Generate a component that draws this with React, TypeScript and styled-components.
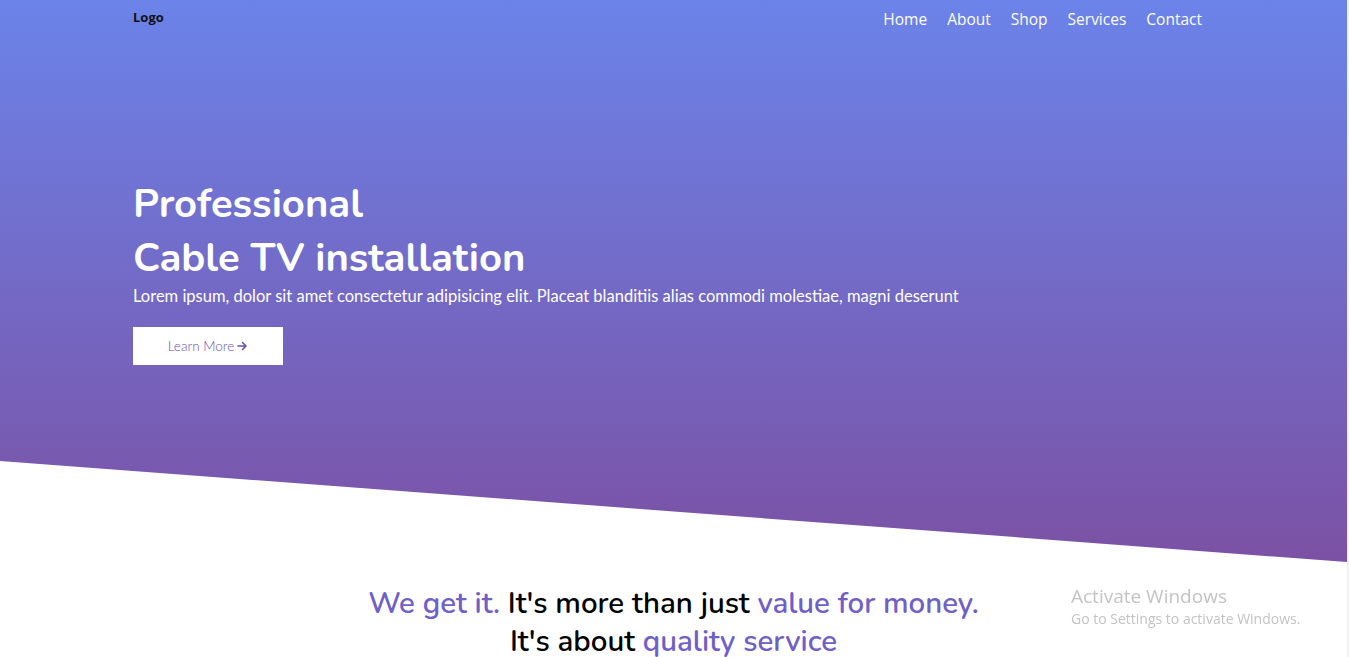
import React from "react";
import styled, { createGlobalStyle } from "styled-components";

const Global = createGlobalStyle`
  html, body { margin: 0; padding: 0; background: #f0f0f0; }
  body { font-family: "Open Sans", "Liberation Sans", sans-serif; }
  * { box-sizing: border-box; }
`;

const Page = styled.div`
  width: calc(100% - 2px);
  min-height: 657px;
  background: #fff;
  overflow: hidden;
`;

const Hero = styled.section`
  height: 562px;
  background: linear-gradient(to bottom, #6b83e9 0%, #7b51a4 100%);
  clip-path: polygon(0 0, 100% 0, 100% 100%, 0 461px);
  display: flex;
  flex-direction: column;
`;

const Nav = styled.nav`
  display: flex;
  align-items: center;
  justify-content: space-between;
  padding: 0 145px 0 133px;
  height: 38px;
`;

const Logo = styled.div`
  font-family: "Open Sans", sans-serif;
  font-weight: 700;
  font-size: 13px;
  color: #111;
  margin-top: -4px;
`;

const Links = styled.ul`
  display: flex;
  gap: 20px;
  list-style: none;
  margin: 0;
  padding: 0;
`;

const Link = styled.a`
  color: #fff;
  font-family: "Open Sans", sans-serif;
  font-size: 15.5px;
  text-decoration: none;
`;

const HeroBody = styled.div`
  padding: 139px 0 0 133px;
  display: flex;
  flex-direction: column;
  align-items: flex-start;
`;

const Title = styled.h1`
  margin: 0;
  font-family: "Nunito", "Lato", sans-serif;
  font-weight: 700;
  font-size: 40px;
  line-height: 54px;
  color: #fff;
`;

const Lead = styled.p`
  margin: 0;
  font-family: "Lato", sans-serif;
  font-size: 16.5px;
  line-height: 22px;
  color: #fff;
`;

const Button = styled.a`
  margin-top: 20px;
  width: 150px;
  height: 38px;
  background: #fff;
  display: flex;
  align-items: center;
  justify-content: center;
  gap: 2px;
  color: #6a4fae;
  font-family: "Lato", sans-serif;
  font-weight: 300;
  font-size: 13.5px;
  text-decoration: none;
`;

const Tagline = styled.section`
  padding: 22px 0 0;
  text-align: center;
  font-family: "Nunito", "Lato", sans-serif;
  font-weight: 600;
  font-size: 29.5px;
  line-height: 38px;
  color: #000;
`;

const Accent = styled.span`
  color: #6f5fc6;
`;

const Watermark = styled.div`
  position: fixed;
  left: 1071px;
  top: 583px;
  font-family: "Open Sans", sans-serif;
  color: #c3c3c3;
  pointer-events: none;
`;

const WmTitle = styled.div`
  font-size: 19px;
  line-height: 26px;
`;

const WmSub = styled.div`
  font-size: 14px;
  line-height: 20px;
`;

export default function App() {
  return (
    <>
      <Global />
      <Page>
        <Hero>
          <Nav>
            <Logo>Logo</Logo>
            <Links>
              {["Home", "About", "Shop", "Services", "Contact"].map((l) => (
                <li key={l}>
                  <Link href="#">{l}</Link>
                </li>
              ))}
            </Links>
          </Nav>
          <HeroBody>
            <Title>
              Professional
              <br />
              Cable TV installation
            </Title>
            <Lead>
              Lorem ipsum, dolor sit amet consectetur adipisicing elit. Placeat blanditiis alias commodi molestiae, magni deserunt
            </Lead>
            <Button href="#">
              Learn More
              <svg width="12" height="12" viewBox="0 0 24 24" fill="none" stroke="currentColor" strokeWidth="3" strokeLinecap="round" strokeLinejoin="round">
                <path d="M4 12h15M13 5l7 7-7 7" />
              </svg>
            </Button>
          </HeroBody>
        </Hero>
        <Tagline>
          <Accent>We get it.</Accent> It's more than just <Accent>value for money.</Accent>
          <br />
          It's about <Accent>quality service</Accent>
        </Tagline>
        <Watermark>
          <WmTitle>Activate Windows</WmTitle>
          <WmSub>Go to Settings to activate Windows.</WmSub>
        </Watermark>
      </Page>
    </>
  );
}
